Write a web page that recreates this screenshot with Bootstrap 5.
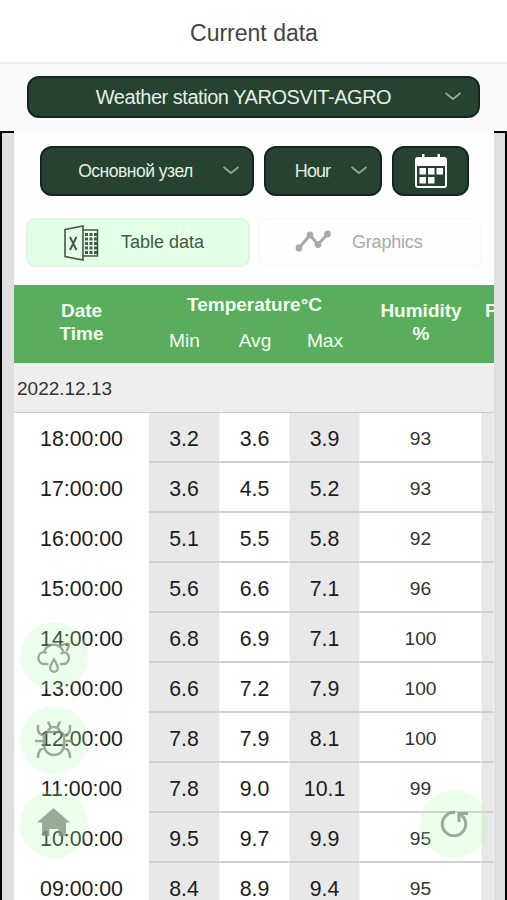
<!DOCTYPE html>
<html lang="en">
<head>
<meta charset="utf-8">
<meta name="viewport" content="width=device-width, initial-scale=1">
<title>Current data</title>
<link href="https://cdn.jsdelivr.net/npm/bootstrap@5.3.0/dist/css/bootstrap.min.css" rel="stylesheet">
<style>
body{font-family:"Liberation Sans",Arial,sans-serif;height:900px;background:#fafafa;line-height:1}
.title-bar{height:64px;background:#fff;border-bottom:2px solid #ededed;color:#444;font-size:23px;padding:5px 0 0 1px}
.station-bar{height:67px;padding:12px 27px 0 27px}
.pick{background:#274230;border:2px solid #14261b;border-radius:12px;color:#e3f0e6;position:relative}
.pick:hover{background:#274230;color:#e3f0e6}
.pick .chev{position:absolute;right:12px;top:50%;margin-top:-7px}
.pick-station{height:42px;font-size:20px;letter-spacing:-.47px;padding:0 20px 0 0}
.pick-node{width:214px;height:50px;font-size:17.5px;letter-spacing:-.5px;padding:0 23px 0 0}
.pick-hour{width:118px;height:50px;font-size:18px;letter-spacing:-.9px;padding:0 21px 0 0}
.pick-date{width:77px;height:50px}
.frame-box{height:769px;border:solid #050505;border-width:2px 2px 0 2px;background:#dfdfdf;padding:0 11px 0 12px}
.panel{background:#fefefe;height:769px;margin-top:-2px}
.pickers{padding:15px 0 0 26px;gap:10px}
.tabs-row{padding:22px 0 0 12px;gap:8px}
.tab-btn{height:49px;border-radius:9px;font-size:18px;border:2px solid #e2f5e2}
.tab-table{width:224px;background:#e3ffe5;color:#46584a}
.tab-graph{width:224px;background:#fefefe;border-color:#fafafa;color:#aaa}
.data-grid{width:480px;table-layout:fixed;border-collapse:separate;border-spacing:0;margin-top:18px}
.data-grid th{background:#5aad5c;color:#f1fff1;text-align:center;padding:0;white-space:nowrap}
.data-grid .big-h{font-size:19px;line-height:23px;padding-bottom:4px;vertical-align:middle}
.data-grid .temp-h{height:39px;font-size:19px}
.data-grid .sub-h{height:39px;font-weight:400;font-size:19.2px;padding-bottom:5px;vertical-align:middle}
.data-grid .day{height:50px;background:#eee;color:#333;font-size:19px;padding:2px 0 0 3px;border-bottom:1px solid #ccc;vertical-align:middle}
.data-grid tbody tr{height:50px}
.val{height:50px;text-align:center;vertical-align:middle;font-size:21.3px;color:#1c1c1c;padding:5px 0 0;border-bottom:2px solid #d0d0d0;border-right:1px solid #f3f3f3;background:#fff}
.val.time-c{border-color:#fff;padding-left:1px}
.val.shade{background:#e8e8e8}
.val.hum{font-size:19.2px;color:#333;padding-top:4px}
.round-btn{position:absolute;width:68px;height:68px;border-radius:50%;background:rgba(175,255,175,.24);z-index:2}
.round-btn svg{opacity:.75}
</style>
<script src="https://cdn.jsdelivr.net/npm/bootstrap@5.3.0/dist/js/bootstrap.bundle.min.js"></script>
</head>
<body class="overflow-hidden position-relative m-0">
<header class="title-bar d-flex align-items-center justify-content-center">Current data</header>
<div class="station-bar">
  <button class="btn pick pick-station w-100 d-flex align-items-center justify-content-center">Weather station YAROSVIT-AGRO
    <svg class="chev" style="right:16px" width="18" height="12" fill="none" stroke="#8fa895" stroke-width="1.8"><path d="M1.500 3l7.500 6 7.500-6"/></svg></button>
</div>
<main class="frame-box">
  <div class="panel overflow-hidden">
    <div class="pickers d-flex">
      <button class="btn pick pick-node d-flex align-items-center justify-content-center">Основной узел
        <svg class="chev" width="18" height="12" fill="none" stroke="#8fa895" stroke-width="1.8"><path d="M1.500 3l7.500 6 7.500-6"/></svg></button>
      <button class="btn pick pick-hour d-flex align-items-center justify-content-center">Hour
        <svg class="chev" width="18" height="12" fill="none" stroke="#8fa895" stroke-width="1.8"><path d="M1.500 3l7.500 6 7.500-6"/></svg></button>
      <button class="btn pick pick-date d-flex align-items-center justify-content-center p-0" aria-label="Date">
        <svg width="34" height="36" viewBox="0 0 34 36" fill="#fff"><path d="M8 1h2.500v4H8zM23.500 1H26v4h-2.500z"/><path fill-rule="evenodd" d="M4 4h26a3 3 0 0 1 3 3v25a3 3 0 0 1-3 3H4a3 3 0 0 1-3-3V7a3 3 0 0 1 3-3zM3 13v19a1 1 0 0 0 1 1h26a1 1 0 0 0 1-1V13z"/><path d="M5.500 15h6.500v6.500H5.500zM14 15h6.500v6.500H14zM22.500 15H29v6.500h-6.500zM5.500 24h6.500v6.500H5.500zM14 24h6.500v6.500H14z"/></svg></button>
    </div>
    <div class="tabs-row d-flex">
      <button class="btn tab-btn tab-table d-flex align-items-center justify-content-start p-0">
        <svg style="margin:0 22px 0 36px" width="35" height="36" viewBox="0 0 35 36" fill="none" stroke="#46584a" stroke-width="1.6"><path d="M1 4.500L19 1v34L1 31.500zM19 5h14.500v26H19"/><path stroke-width="1.900" d="M6 12l6.500 13M12.500 12L6 25"/><path stroke-width="3" d="M21 9.500h3M25.500 9.500h3M30 9.500h3M21 14h3M25.500 14h3M30 14h3M21 18.500h3M25.500 18.500h3M30 18.500h3M21 23h3M25.500 23h3M30 23h3M21 27.500h3M25.500 27.500h3M30 27.500h3"/></svg>
        Table data</button>
      <button class="btn tab-btn tab-graph d-flex align-items-center justify-content-start p-0">
        <svg style="margin:0 21px 3px 35px" width="36" height="22" viewBox="0 0 36 22" fill="#aaa" stroke="#aaa"><path fill="none" stroke-width="3" d="M4 18L15 5l8 9.500L32.500 4"/><g stroke="none"><circle cx="4" cy="18" r="3.400"/><circle cx="15" cy="5" r="3.400"/><circle cx="23" cy="14.500" r="3.400"/><circle cx="32.500" cy="4" r="3.400"/></g></svg>
        <span style="letter-spacing:-.2px">Graphics</span></button>
    </div>
    <table class="data-grid">
      <colgroup><col style="width:135px"><col style="width:71px"><col style="width:70px"><col style="width:70px"><col style="width:122px"><col style="width:12px"></colgroup>
      <thead>
        <tr><th rowspan="2" class="big-h">Date<br>Time</th><th colspan="3" class="temp-h">Temperature°C</th><th rowspan="2" class="big-h">Humidity<br>%</th><th rowspan="2" class="big-h text-start overflow-hidden"><span style="margin-left:3px">P</span><br>&nbsp;</th></tr>
        <tr><th class="sub-h">Min</th><th class="sub-h">Avg</th><th class="sub-h">Max</th></tr>
      </thead>
      <tbody id="rows"><tr><td colspan="6" class="day">2022.12.13</td></tr></tbody>
    </table>
  </div>
</main>

<button class="round-btn btn p-0 border-0 d-flex align-items-center justify-content-center" style="left:20px;top:622px" aria-label="Rain">
  <svg class="mt-1" width="38" height="32" viewBox="0 0 38 32" fill="none" stroke="#7d8f7d" stroke-width="2.400"><path d="M13.500 22H9a6 6 0 0 1-1-11.800q2-.3 3.500 1M9 10a10 9.500 0 0 1 19.500 0M26 12q2-2 4-1.500a6 6 0 0 1-1 11.500h-4M26 3.500q6-2.500 7.500-1.500t-2 7M19 17.500c-2 3.500-3.800 5.500-3.800 8.500a3.800 3.800 0 0 0 7.600 0c0-3-1.800-5-3.800-8.500z"/></svg></button>
<button class="round-btn btn p-0 border-0 d-flex align-items-center justify-content-center" style="left:20px;top:706px" aria-label="Pests">
  <svg width="40" height="40" viewBox="0 0 40 40" fill="none" stroke="#7d8f7d" stroke-width="2.500"><path d="M14 12h12q4 1 4 6v7a10 10 0 0 1-20 0v-7q0-5 4-6zM14 12q1-5 6-5t6 5M17 8l-3-6.500M23 8l3-6.500M4 5v4q0 5 6 7M36 5v4q0 5-6 7M1 21h9M30 21h9M10 28q-6 1-6 10M30 28q6 1 6 10"/></svg></button>
<button class="round-btn btn p-0 border-0 d-flex align-items-center justify-content-center" style="left:20px;top:790px" aria-label="Home">
  <svg width="34" height="32" viewBox="0 0 34 32" fill="#7d8f7d"><path d="M16.500 0L33 14.500h-4V28h-7.500v-7h-9v7H5V14.500H0z"/></svg></button>
<button class="round-btn btn p-0 border-0 d-flex align-items-center justify-content-center" style="left:420px;top:790px" aria-label="Refresh">
  <svg width="30" height="30" viewBox="0 0 30 30" fill="none" stroke="#7d8f7d" stroke-width="3"><path d="M16 3.400A11.700 11.700 0 1 0 25 9L21 5"/><path d="M20 13V4.500H29"/></svg></button>

<script>
const rows = [
  ["18:00:00","3.2","3.6","3.9","93"],["17:00:00","3.6","4.5","5.2","93"],["16:00:00","5.1","5.5","5.8","92"],
  ["15:00:00","5.6","6.6","7.1","96"],["14:00:00","6.8","6.9","7.1","100"],["13:00:00","6.6","7.2","7.9","100"],
  ["12:00:00","7.8","7.9","8.1","100"],["11:00:00","7.8","9.0","10.1","99"],["10:00:00","9.5","9.7","9.9","95"],
  ["09:00:00","8.4","8.9","9.4","95"]];
const cls = ["time-c","shade","","shade","hum"];
document.getElementById("rows").insertAdjacentHTML("beforeend", rows.map(r =>
  "<tr>" + r.map((v,i) => `<td class="val ${cls[i]}">${v}</td>`).join("") + '<td class="val shade"></td></tr>').join(""));
</script>
</body>
</html>
